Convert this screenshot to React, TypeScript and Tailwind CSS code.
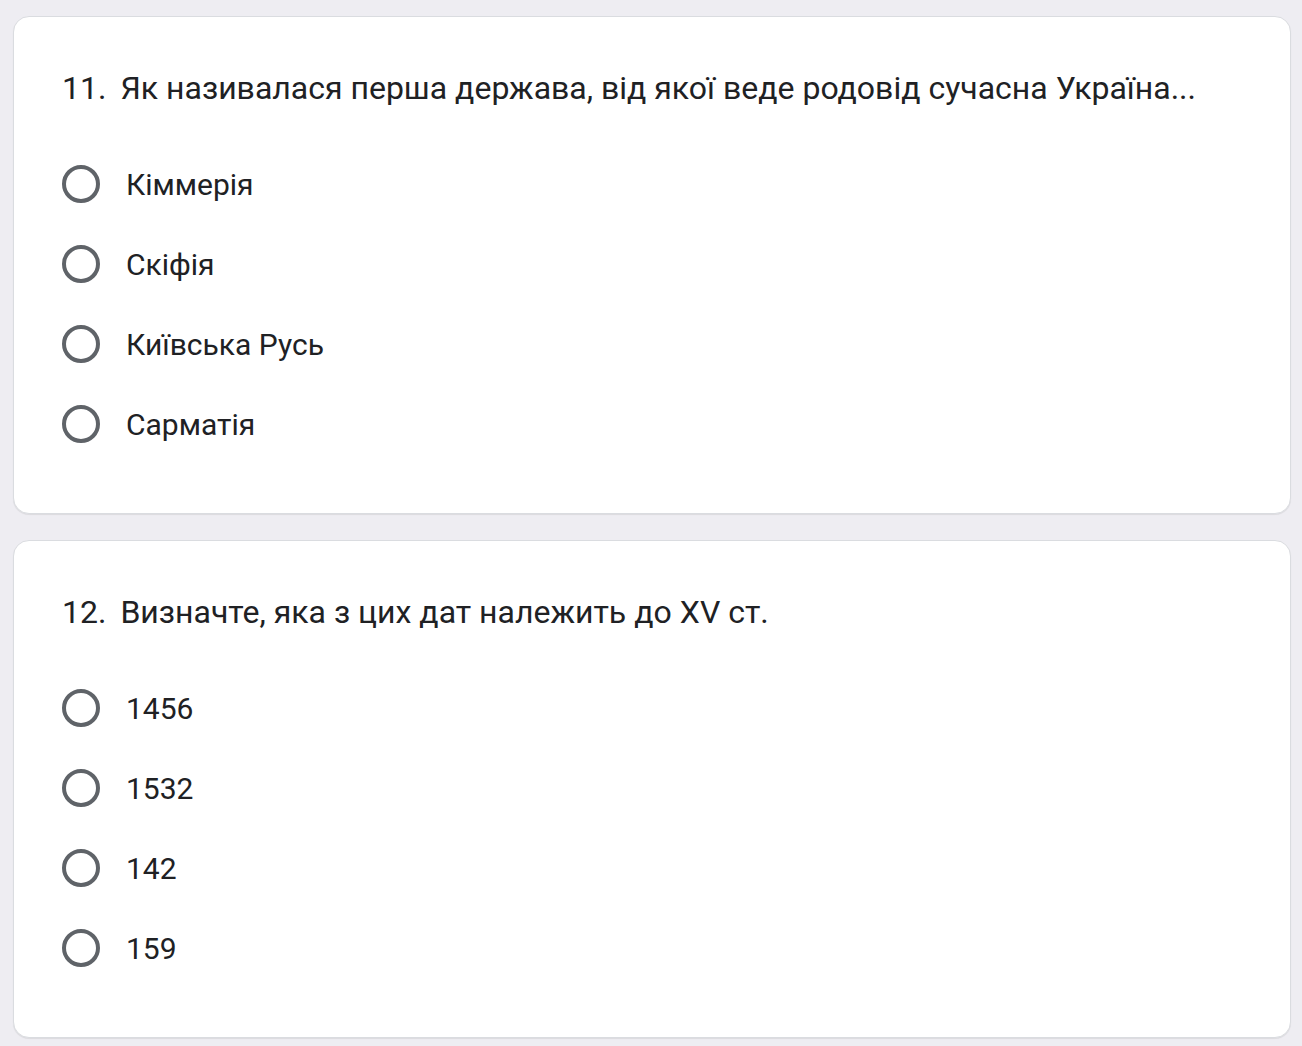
const questions = [
  {
    num: "11.",
    title: "Як називалася перша держава, від якої веде родовід сучасна Україна...",
    options: ["Кіммерія", "Скіфія", "Київська Русь", "Сарматія"],
  },
  {
    num: "12.",
    title: "Визначте, яка з цих дат належить до XV ст.",
    options: ["1456", "1532", "142", "159"],
  },
];

function Radio() {
  return <div className="w-[38px] h-[38px] rounded-full border-[4px] border-[#5f6368] shrink-0" />;
}

export default function App() {
  return (
    <div
      className="min-h-[1046px] bg-[#eeedf2] pl-[13px] pr-[11px] pt-[16px] pb-[8px] flex flex-col gap-[26px] text-[#202124]"
      style={{ fontFamily: "Roboto, 'Noto Sans', sans-serif" }}
    >
      {questions.map((q) => (
        <div
          key={q.num}
          className="bg-white rounded-[16px] border border-[#dadce0] shadow-[0_1px_1px_rgba(0,0,0,0.08)] h-[498px] pt-[51px] px-[48px]"
        >
          <div className="flex h-[40px] items-center text-[32px] leading-[40px]">
            <span>{q.num}</span>
            <span className="ml-[14px]">{q.title}</span>
          </div>
          <div className="mt-[36px] flex flex-col">
            {q.options.map((o) => (
              <div key={o} className="h-[80px] flex items-center">
                <Radio />
                <span className="ml-[26px] text-[30px]">{o}</span>
              </div>
            ))}
          </div>
        </div>
      ))}
    </div>
  );
}
